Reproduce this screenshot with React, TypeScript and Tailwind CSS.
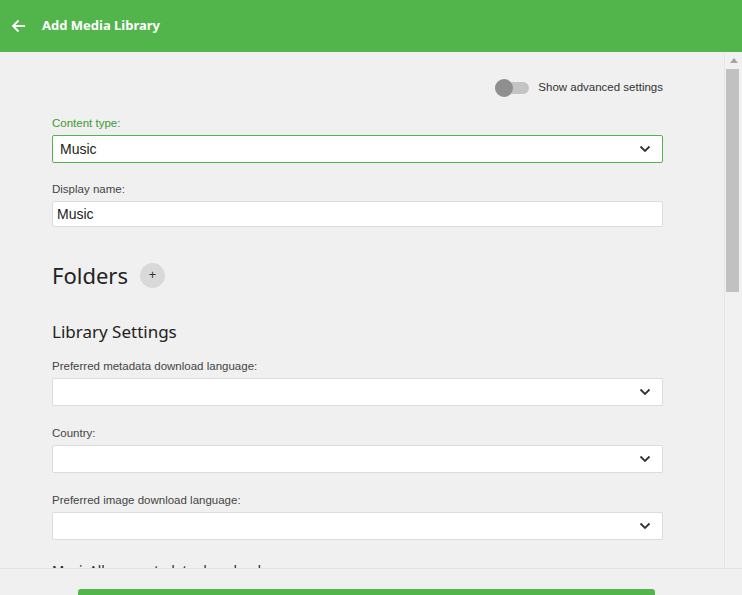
import React from 'react';

const sans = "font-['Liberation_Sans',Arial,sans-serif]";
const ui = "font-['Noto_Sans','Open_Sans',sans-serif]";

function Chevron() {
  return (
    <svg width="12" height="8" viewBox="0 0 12 8" className="shrink-0">
      <path d="M1.5 1.5 L6 6 L10.5 1.5" fill="none" stroke="#333" strokeWidth="1.8" />
    </svg>
  );
}

function SelectBox({ value, active }: { value?: string; active?: boolean }) {
  return (
    <div
      className={`flex h-[28px] items-center justify-between rounded-[2px] bg-white pl-[7px] pr-[11px] ${
        active ? 'border border-[#52b54b]' : 'border border-[#dcdcdc]'
      }`}
    >
      <span className="text-[14px] text-[#222]">{value}</span>
      <Chevron />
    </div>
  );
}

function Field({ label, children, green }: { label: string; children: React.ReactNode; green?: boolean }) {
  return (
    <div>
      <div className={`mb-[5px] text-[11.5px] leading-[14px] ${green ? 'text-[#3c9a33]' : 'text-[#444]'}`}>{label}</div>
      {children}
    </div>
  );
}

export default function App() {
  return (
    <div className={`flex h-[595px] w-[742px] flex-col overflow-hidden bg-[#f0f0f0] ${sans}`}>
      {/* Header */}
      <div className="flex h-[52px] shrink-0 items-center bg-[#52b54b] pl-[11px]">
        <svg width="16" height="16" viewBox="0 0 16 16">
          <path d="M14 8 H2.5 M7.5 2.5 L2 8 L7.5 13.5" fill="none" stroke="#fff" strokeWidth="1.8" />
        </svg>
        <h1 className={`ml-[15px] text-[13px] font-bold text-white ${ui}`}>Add Media Library</h1>
      </div>

      <div className="flex min-h-0 flex-1">
        {/* Content */}
        <div className="min-w-0 flex-1 overflow-hidden">
          <div className="ml-[52px] w-[611px] pt-[26px]">
            <div className="flex h-5 items-center justify-end">
              <div className="relative mr-[9px] h-[12px] w-[34px] rounded-full bg-[#c4c4c4]">
                <div className="absolute -top-[3px] left-0 h-[18px] w-[18px] rounded-full bg-[#8f8f8f]" />
              </div>
              <span className="text-[11.5px] text-[#333]">Show advanced settings</span>
            </div>

            <div className="mt-[18px]">
              <Field label="Content type:" green>
                <SelectBox value="Music" active />
              </Field>
            </div>

            <div className="mt-[19px]">
              <Field label="Display name:">
                <div className="flex h-[26px] items-center rounded-[2px] border border-[#dcdcdc] bg-white pl-[4px] text-[14px] text-[#222]">
                  Music
                </div>
              </Field>
            </div>

            <div className={`mt-[33px] flex items-center ${ui}`}>
              <h2 className="text-[22px] leading-[30px] text-[#222]">Folders</h2>
              <div className="ml-[12px] flex h-[25px] w-[25px] items-center justify-center rounded-full bg-[#d9d9d9] text-[13px] text-[#333]">
                +
              </div>
            </div>

            <h3 className={`mt-[30px] text-[17px] font-normal leading-[24px] text-[#222] ${ui}`}>Library Settings</h3>

            <div className="mt-[15px] flex flex-col gap-[20px]">
              <Field label="Preferred metadata download language:">
                <SelectBox />
              </Field>
              <Field label="Country:">
                <SelectBox />
              </Field>
              <Field label="Preferred image download language:">
                <SelectBox />
              </Field>
            </div>

            <div className={`mt-[21px] text-[13.5px] text-[#222] ${ui}`}>MusicAlbum metadata downloaders:</div>
          </div>
        </div>

        {/* Scrollbar */}
        <div className="flex w-[18px] shrink-0 flex-col items-center border-l border-[#e6e6e6] bg-[#f1f1f1]">
          <svg width="8" height="5" viewBox="0 0 8 5" className="mt-[6px]">
            <path d="M0 5 L4 0 L8 5 Z" fill="#a3a3a3" />
          </svg>
          <div className="ml-[-3px] mt-[6px] h-[223px] w-[13px] bg-[#c1c1c1]" />
        </div>
      </div>

      {/* Footer */}
      <div className="h-[27px] shrink-0 border-t border-[#e2e2e2] bg-[#f0f0f0] pt-[20px]">
        <div className="ml-[78px] h-[20px] w-[577px] rounded-t-[3px] bg-[#52b54b]" />
      </div>
    </div>
  );
}
